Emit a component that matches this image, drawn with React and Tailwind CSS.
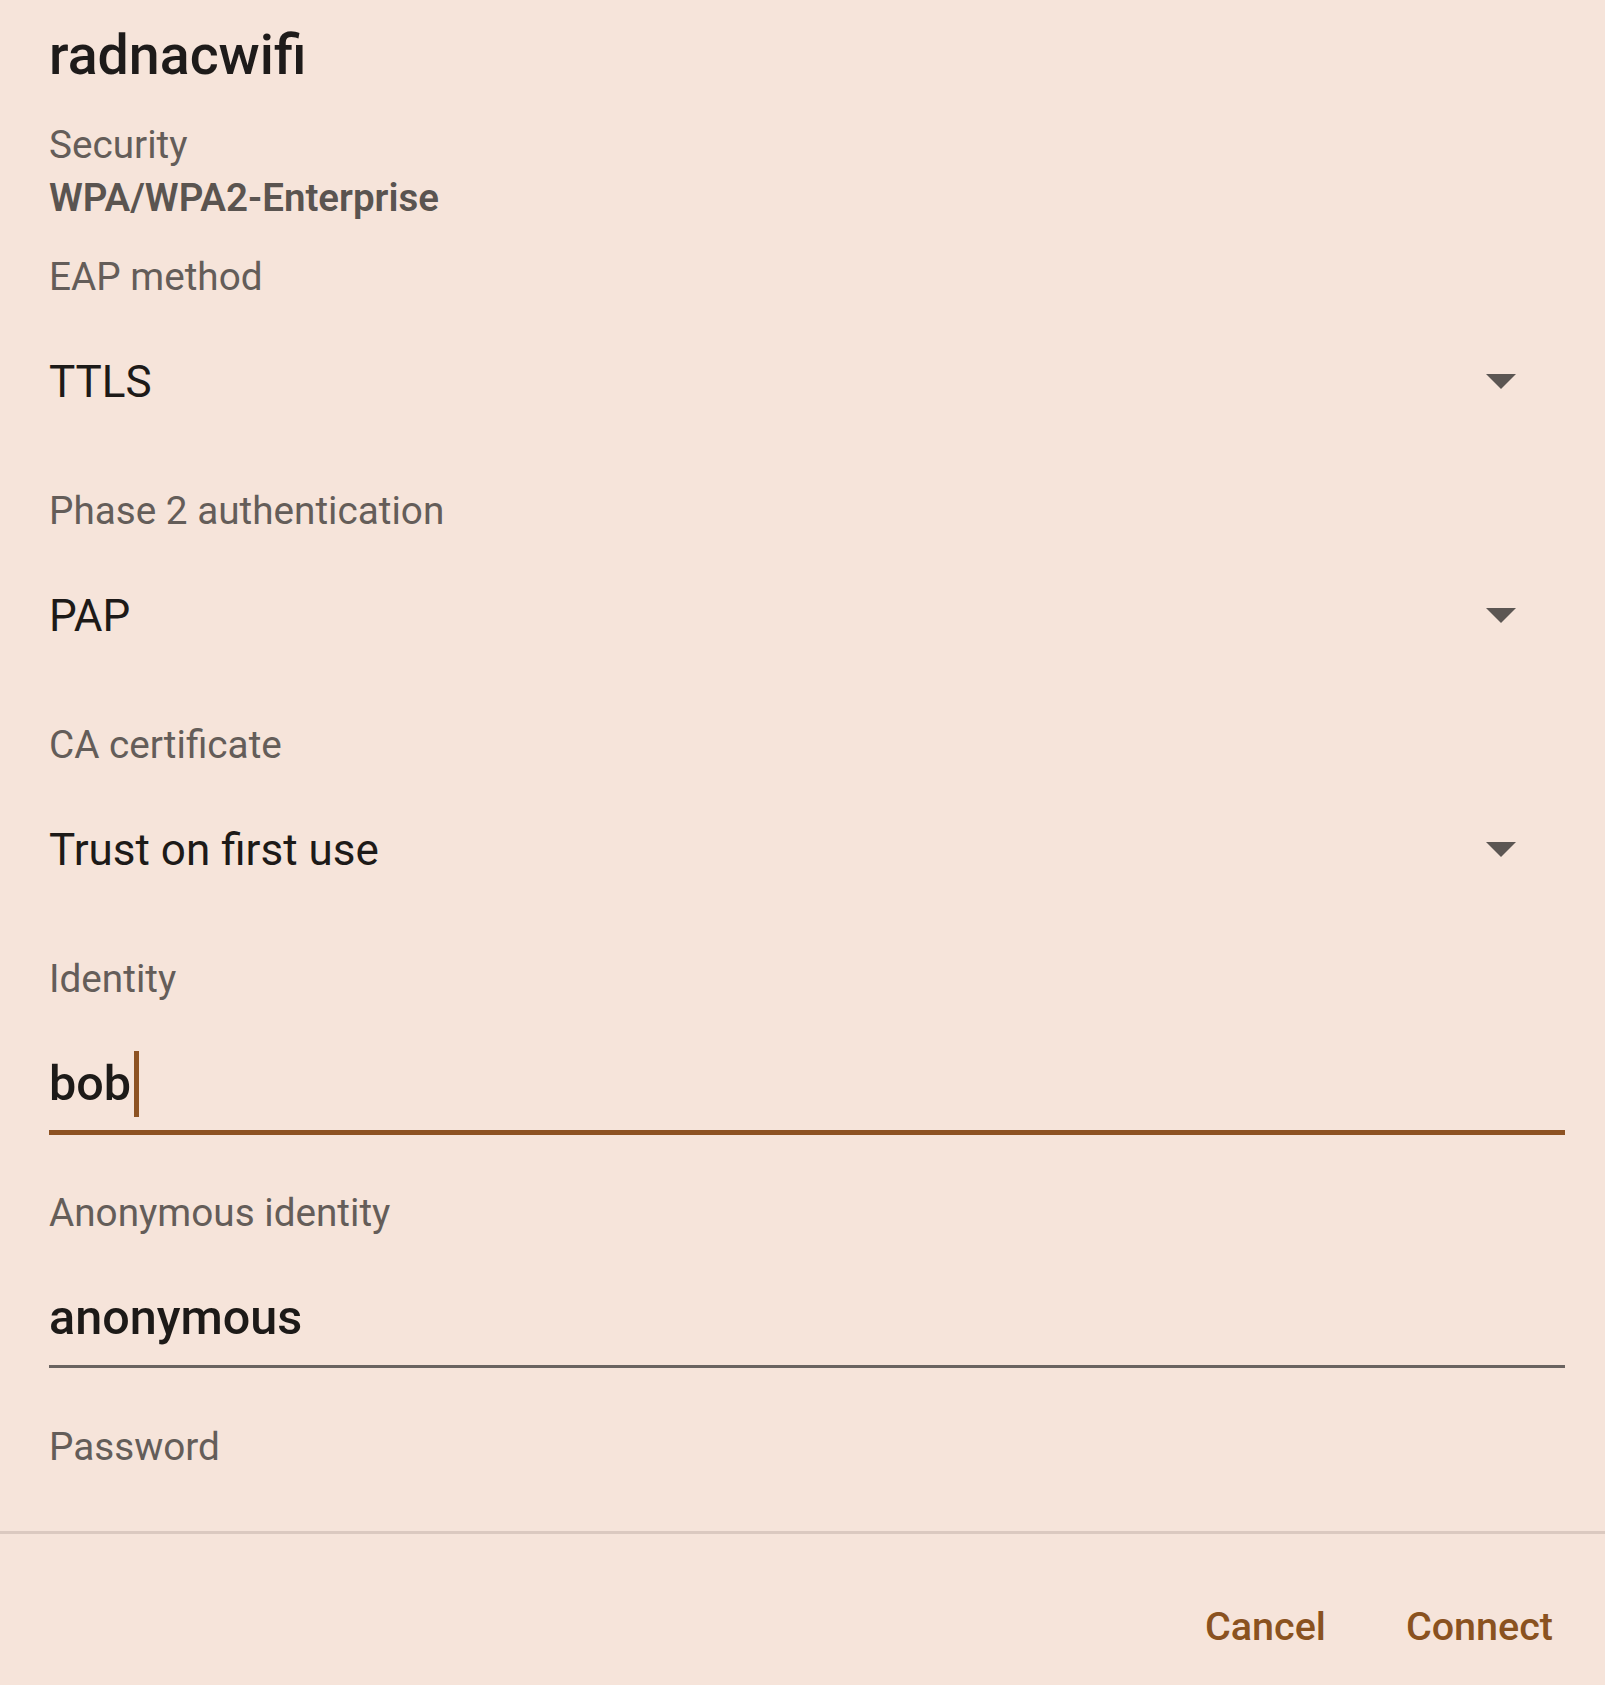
import { useState } from 'react';

const font = { fontFamily: 'Roboto, "Noto Sans", sans-serif' };

const Caret = () => (
  <svg width="30" height="16" viewBox="0 0 30 16" className="shrink-0">
    <path d="M0 0 L30 0 L15 15 Z" fill="#5c5653" />
  </svg>
);

const Label = ({ children }) => (
  <div className="h-[44px] flex items-center text-[38.7px] leading-none text-[#645d59]">{children}</div>
);

const SpinnerField = ({ label, value }) => (
  <div className="h-[234px] flex flex-col">
    <Label>{label}</Label>
    <div className="mt-[46px] h-[74px] flex items-center justify-between pr-[49px]">
      <span className="text-[44px] leading-none text-[#1d1a18]">{value}</span>
      <Caret />
    </div>
  </div>
);

const TextField = ({ label, value, focused }) => (
  <div className="h-[234px] flex flex-col">
    <Label>{label}</Label>
    <div className="mt-[46px] h-[74px] flex items-center">
      <span className="text-[48.5px] leading-none font-medium text-[#1d1a18]">{value}</span>
      {focused && <span className="ml-[3px] w-[5px] h-[66px] bg-[#8d5222]"></span>}
    </div>
    <div
      className={
        focused
          ? 'mt-[9px] h-[5px] bg-[#8d5222]'
          : 'mt-[10px] h-[3px] bg-[#6a6360]'
      }
    ></div>
  </div>
);

export default function App() {
  const [identity] = useState('bob');

  return (
    <div className="w-[1605px] h-[1685px] bg-[#f6e4da] flex flex-col overflow-hidden" style={font}>
      <div className="h-[1531px] overflow-hidden pl-[49px] pr-[40px]">
        <div className="mt-[26px] h-[60px] flex items-center text-[55.5px] font-medium leading-none text-[#1e1b1a]">
          radnacwifi
        </div>
        <div className="mt-[37px]">
          <Label>Security</Label>
        </div>
        <div className="mt-[4px] h-[54px] flex items-center text-[38.5px] font-semibold leading-none text-[#5a5450]">
          WPA/WPA2-Enterprise
        </div>
        <div className="mt-[30px]">
          <SpinnerField label="EAP method" value="TTLS" />
          <SpinnerField label="Phase 2 authentication" value="PAP" />
          <SpinnerField label="CA certificate" value="Trust on first use" />
          <TextField label="Identity" value={identity} focused />
          <TextField label="Anonymous identity" value="anonymous" />
          <div className="h-[234px]">
            <Label>Password</Label>
          </div>
        </div>
      </div>
      <div className="h-[3px] bg-[#dbc9c0]"></div>
      <div className="flex-1 flex items-center justify-end gap-[80px] pr-[52px] pt-[34px]">
        <button className="text-[39.5px] font-medium leading-none text-[#8a5220]">Cancel</button>
        <button className="text-[39.5px] font-medium leading-none text-[#8a5220]">Connect</button>
      </div>
    </div>
  );
}
